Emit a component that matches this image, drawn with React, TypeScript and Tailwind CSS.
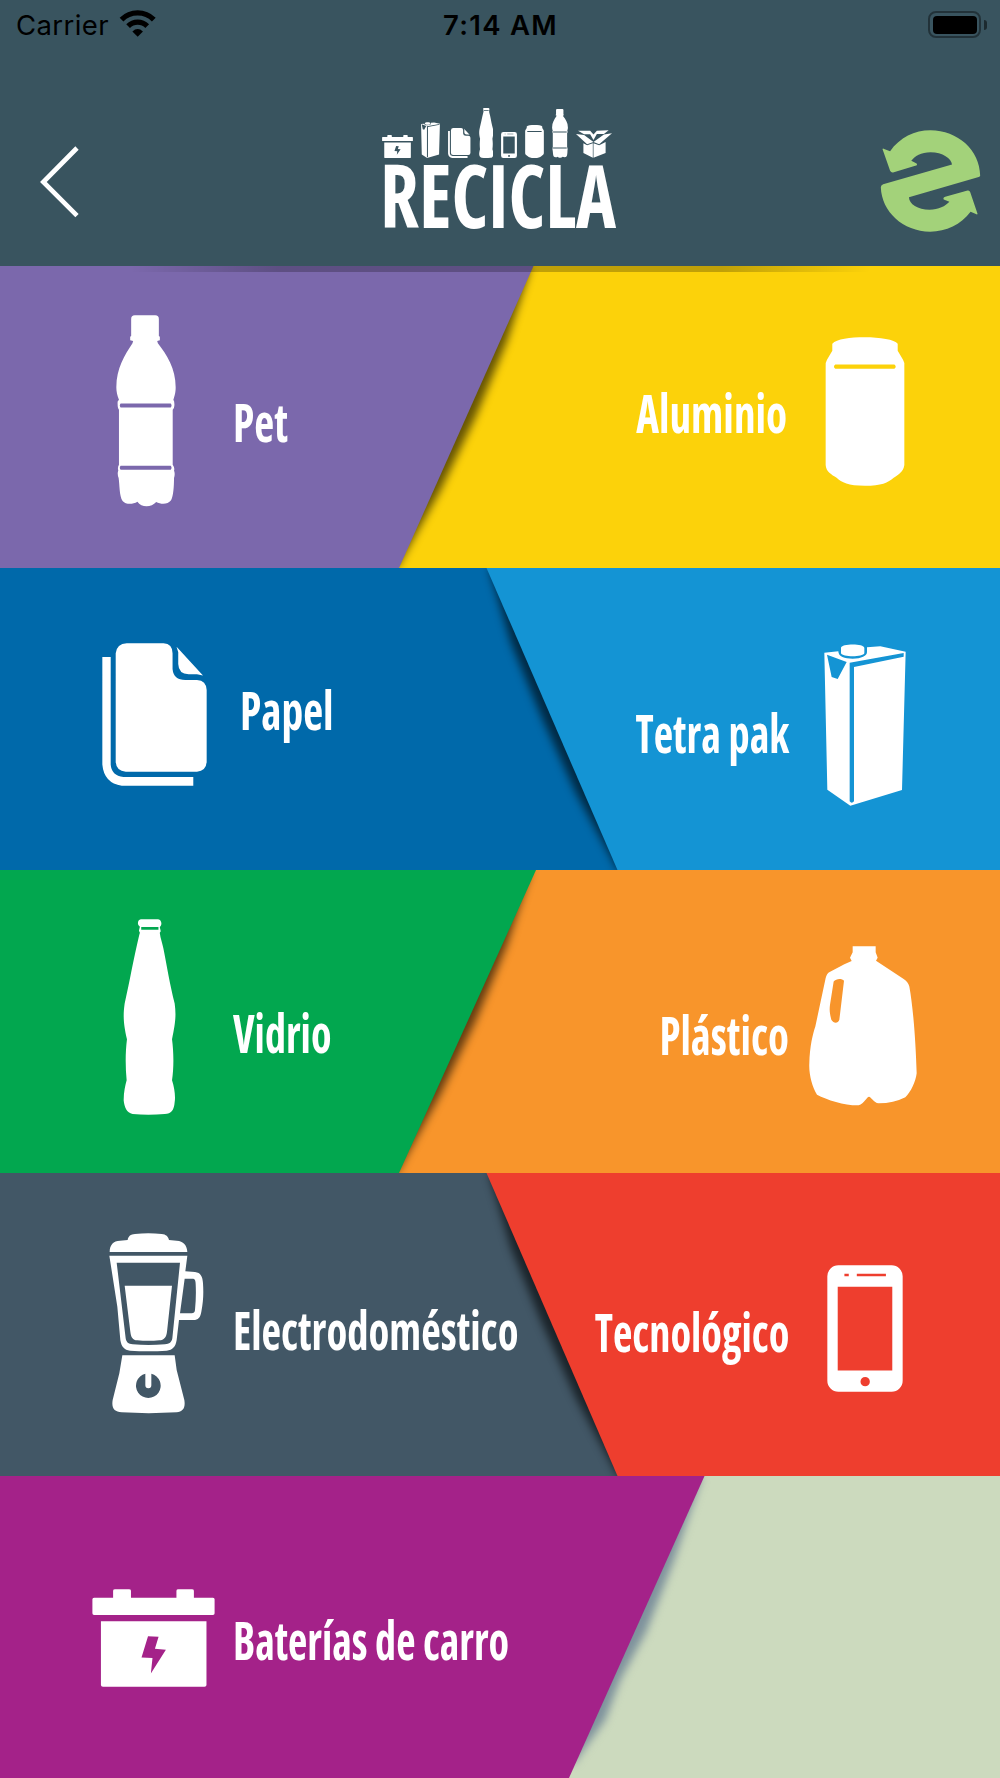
import type { ReactNode } from 'react';
import clsx from 'clsx';

type IconProps = { className?: string };

function Glyph({ viewBox, d, className }: IconProps & { viewBox: string; d: string }) {
  return (
    <svg
      viewBox={viewBox}
      className={clsx('block shrink-0', className)}
      preserveAspectRatio="none"
      fill="currentColor"
      fillRule="evenodd">
      <path d={d} />
    </svg>
  );
}

const PetIcon = ({ className }: IconProps) => (
  <Glyph
    className={className}
    viewBox="108 45 182 577"
    d="M165 46H227Q238 46 238 57V108L241 110V121L233 123L235 130C262 165 289 205 289 262C289 280 285 290 282 300Q286 305 285 318Q285 325 280 330V495Q287 505 284 512Q288 522 284 535C284 560 282 590 275 602C265 615 245 615 230 607C215 624 185 624 173 606C158 615 138 615 128 604C118 590 119 555 116 535Q111 522 115 512Q112 503 117 495V330Q112 325 113 305L117 300C112 288 109 275 109 262C109 205 135 165 158 130L160 123L151 121V110L154 108V57Q154 46 165 46ZM122 311Q117 317 122 323H274Q279 317 274 311ZM122 498Q117 504 122 510H274Q279 504 274 498Z"
  />
);

const CanIcon = ({ className }: IconProps) => (
  <Glyph
    className={className}
    viewBox="675 52 241 446"
    d="M697 72C710 58 750 53 795 53C840 53 885 60 894 72V93L910 120Q915 127 914 140V435C912 455 895 465 882 473C865 488 845 497 795 497C745 497 725 487 710 473C695 464 678 455 677 435V140Q676 128 681 120L697 93ZM706 134Q698 140.500 706 147H884Q892 140.500 884 134Z"
  />
);

const PaperIcon = ({ className }: IconProps) => (
  <Glyph
    className={className}
    viewBox="66 67 314 430"
    d="M67 109H92V432Q94 465 130 470H339V496H125Q72 488 67 432ZM140 68H250Q277 70 277 98V145Q280 178 315 178H350Q378 180 379 208V425Q377 452 350 454H137Q109 452 107 425V98Q110 70 140 68ZM289 78L368 165L350 161H325Q295 160 294 130V95Z"
  />
);

const CartonIcon = ({ className }: IconProps) => (
  <Glyph
    className={className}
    viewBox="673 72 246 487"
    d="M674 98L716 94C716 110 735 116 759 116C785 116 802 108 802 96V82L842 79L918 95L907 511L752 558L683 510ZM682 104L741 126L714 177L696 171ZM750 128L912 99V110L763 141V545Q756 553 750 545ZM724 84C724 71 793 70 794 84V100C790 112 728 112 724 100Z"
  />
);

const GlassIcon = ({ className }: IconProps) => (
  <Glyph
    className={className}
    viewBox="129 57 160 587"
    d="M183 58H235Q245 60 245 72Q243 80 240 81L243 94L240 98C242 115 248 130 251 145C262 200 270 250 285 310C290 345 287 370 277 417C282 455 283 500 277 540C284 560 288 590 285 605C283 630 275 640 255 641Q205 645 158 641C140 638 133 620 131 600C131 575 136 555 140 540C136 500 136 455 141 417C130 370 129 345 134 310C150 240 160 180 178 105L180 98L177 92L180 80Q174 78 174 70Q174 60 183 58ZM184 81V89H236V81Z"
  />
);

const JugIcon = ({ className }: IconProps) => (
  <Glyph
    className={className}
    viewBox="506 49 324 479"
    d="M637 50H706V68L712 84L707 93L740 115L790 148Q803 156 807 170C818 230 826 330 829 430C826 455 812 485 795 502Q760 520 715 520C700 518 692 500 686 500C680 500 672 520 655 526C615 527 560 510 530 494C515 470 505 430 507 400C508 350 518 310 525 290L556 145Q560 130 568 127L612 104L634 94L629 84L637 68ZM580 155C587 146 605 145 611 153L597 270C593 282 580 282 573 270C568 250 567 240 569 225Z"
  />
);

const BlenderIcon = ({ className }: IconProps) => (
  <Glyph
    className={className}
    viewBox="87 69 285 543"
    d="M89 126C89 105 100 92 120 92L143 90C145 78 152 73 165 72Q205 68 245 72C258 73 265 80 267 90L290 92C310 93 321 105 322 126ZM88 137H322L316 184L345 186C362 188 368 200 369 220C371 250 370 275 364 305C361 322 355 330 340 330H297L290 390C287 410 278 420 260 422Q205 426 150 422C133 420 124 410 121 390L112 290ZM110 158L137 385C139 397 145 402 158 403Q205 407 255 403C268 402 275 397 277 385L300 158ZM314 206H340Q347 207 347 222Q349 260 345 300Q344 310 335 310H300ZM134 227H276L261 365C259 382 252 390 238 391Q205 394 172 391C158 390 153 382 151 365ZM127 436H284L290 480L313 570C317 595 308 605 290 607Q205 612 125 607C103 605 94 595 98 570L118 490ZM196 491A37 37 0 1 0 214 491V526A9 9 0 0 1 196 526Z"
  />
);

const PhoneIcon = ({ className }: IconProps) => (
  <Glyph
    className={className}
    viewBox="742 46 227 380"
    d="M776 47H935A33 33 0 0 1 968 80V392A33 33 0 0 1 935 425H776A33 33 0 0 1 743 392V80A33 33 0 0 1 776 47ZM774 111V362H937V111ZM794 72V80H807V72ZM831 72V80H918V72ZM842 395A14 14 0 1 0 870 395A14 14 0 1 0 842 395Z"
  />
);

const BatteryIcon = ({ className }: IconProps) => (
  <Glyph
    className={className}
    viewBox="29 87 303 295"
    d="M34 113H81V92Q81 88 86 88H120Q125 88 125 92V113H237V92Q237 88 242 88H275Q280 88 280 92V113H327Q331 113 331 118V160Q331 165 327 165H34Q30 165 30 160V118Q30 113 34 113ZM51 184H311V376Q311 381 306 381H56Q51 381 51 376ZM167 229L151 293L178 295L174 341L211 270L184 267L193 231Z"
  />
);

const BoxIcon = ({ className }: IconProps) => (
  <Glyph
    className={className}
    viewBox="650 119 107 86"
    d="M650 131L674 134L702 156L683 163ZM757 129L733 133L702 156L719 163ZM656 121H692L702 133L712 121L747 120L733 131L712 131L702 150L692 132L674 132ZM672 160L683 166L700 160V204L672 190ZM702 160L719 166L738 156V190L702 204Z"
  />
);

function StatusBar() {
  return (
    <div className="flex h-[51px] items-center font-['Inter',sans-serif] text-[27.500px] leading-none text-black">
      <div className="flex w-[443px] items-center pl-4">
        <span className="mt-px tracking-[0.4px]">Carrier</span>
        <svg viewBox="360 30 111 82" className="-mt-1 ml-2.5 h-[27px] w-[37px]" fill="none" stroke="currentColor">
          <path d="M367 59A69 69 0 0 1 465 59" strokeWidth="16" />
          <path d="M387 79A41 41 0 0 1 445 79" strokeWidth="16" />
          <path d="M416 111L400 95Q416 80 432 95Z" fill="currentColor" stroke="none" />
        </svg>
      </div>
      <span className="mt-px font-semibold tracking-[1.300px] whitespace-nowrap">7:14 AM</span>
      <div className="mr-[13px] -mt-0.5 ml-auto flex items-center gap-[3px]">
        <div className="h-[27px] w-[53px] rounded-[8px] border-2 border-black/40 p-[2.500px]">
          <div className="h-full rounded-[4px] bg-black" />
        </div>
        <div className="h-2.5 w-[3px] rounded-r-full bg-black/50" />
      </div>
    </div>
  );
}

function Header() {
  return (
    <header className="relative z-20 h-[266px] bg-[#39545f]">
      <StatusBar />
      <div className="flex items-start text-white">
        <button className="mt-[95px] ml-10 w-[338px]" aria-label="Volver">
          <svg viewBox="120 437 117 216" className="h-[72px] w-[39px]" fill="none" stroke="currentColor" strokeWidth="14">
            <path d="M231 443L130 545L231 646" />
          </svg>
        </button>
        <div className="mt-[57px] w-[250px]">
          <div className="ml-1 flex items-end gap-2">
            <BatteryIcon className="h-[23px] w-[31px]" />
            <CartonIcon className="h-9 w-[19px]" />
            <PaperIcon className="h-[30px] w-[22.500px]" />
            <GlassIcon className="h-[50px] w-[14.500px]" />
            <PhoneIcon className="h-[26px] w-4" />
            <CanIcon className="h-[33px] w-[19px]" />
            <PetIcon className="h-[49px] w-4" />
            <BoxIcon className="h-7 w-9" />
          </div>
          <h1 className="-mt-2 ml-[2px] origin-left scale-x-[0.865] font-['Open_Sans',sans-serif] text-[88px] leading-none font-bold font-stretch-75%">
            RECICLA
          </h1>
        </div>
        <svg viewBox="92 389 302 308" className="mt-[79px] ml-[252px] h-[102px] w-[101px]" fill="#a3d27a">
          <path d="M98 446Q99 443 103 446L121 453C150 412 195 390 243 390C325 390 392 450 393 527Q392 531 386 532L178 592C178 612 205 630 240 630C268 630 288 619 300 606L283 599Q279 593 290 590L355 572Q361 571 363 577L385 642Q385 645 380 643L364 636C335 675 290 696 242 696C160 696 95 635 93 562Q93 556 100 553L308 493C306 475 280 456 243 456C215 456 195 468 185 482L201 490Q205 495 197 497L130 517Q124 518 121 512Z" />
        </svg>
      </div>
      {/* shade the header drops on the first row */}
      <div className="absolute top-full left-[130px] h-1.5 w-[740px] bg-[linear-gradient(to_right,transparent,rgba(0,0,0,0.24)_20%,rgba(0,0,0,0.24)_80%,transparent)]" />
    </header>
  );
}

function Label({ children, className }: { children: ReactNode; className?: string }) {
  return (
    <span
      className={clsx(
        "shrink-0 font-['Open_Sans',sans-serif] text-[53px] leading-none font-bold whitespace-nowrap font-stretch-75%",
        className,
      )}>
      {children}
    </span>
  );
}

type RowProps = {
  className: string;
  panel: string;
  shadow: string;
  children: ReactNode;
};

// Each row is a back colour with a slanted panel laid over it in the same grid cell.
function Row({ className, panel, shadow, children }: RowProps) {
  return (
    <div className={clsx('grid w-full overflow-hidden', className)}>
      <div className="blur-[4px] [grid-area:1/1]">
        <div className={clsx('h-full', shadow)} />
      </div>
      <div className={clsx('[grid-area:1/1]', panel)} />
      <div className="z-10 flex items-start justify-between [grid-area:1/1]">{children}</div>
    </div>
  );
}

const SLANT_LEFT_SHADOW =
  'bg-black/60 [clip-path:polygon(0_0,531px_0,507px_75px,476px_150px,440px_225px,397px_100%,0_100%)]';
const SLANT_RIGHT = '[clip-path:polygon(486.500px_0,100%_0,100%_100%,617.500px_100%)]';
const SLANT_RIGHT_SHADOW =
  'bg-black/60 [clip-path:polygon(489px_0,100%_0,100%_100%,618px_100%,576px_225px,542px_150px,511px_75px)]';

export default function App() {
  return (
    <div className="w-[1000px] overflow-hidden text-white">
      <Header />
      <Row
        className="h-[302px] bg-[#fcd20a]"
        panel="bg-[#7b68ac] [clip-path:polygon(0_0,533.500px_0,399px_100%,0_100%)]"
        shadow={SLANT_LEFT_SHADOW}>
        <div className="flex">
          <div className="w-[233px]">
            <PetIcon className="mt-[49px] ml-[116px] h-[192px] w-[60px]" />
          </div>
          <Label className="mt-[129px] origin-left scale-x-[0.82]">Pet</Label>
        </div>
        <div className="flex">
          <Label className="mt-[120px] origin-right scale-x-[0.815]">Aluminio</Label>
          <div className="w-[213px]">
            <CanIcon className="mt-[71px] ml-[38px] h-[149px] w-20" />
          </div>
        </div>
      </Row>
      <Row className="h-[302px] bg-[#0069aa]" panel={clsx('bg-[#1494d4]', SLANT_RIGHT)} shadow={SLANT_RIGHT_SHADOW}>
        <div className="flex">
          <div className="w-[240px]">
            <PaperIcon className="mt-[75px] ml-[102px] h-[143px] w-[105px]" />
          </div>
          <Label className="mt-[115px] origin-left scale-x-[0.82]">Papel</Label>
        </div>
        <div className="flex">
          <Label className="mt-[138px] origin-right scale-x-[0.8]">Tetra pak</Label>
          <div className="w-[211px]">
            <CartonIcon className="mt-[76px] ml-[35px] h-[162px] w-[82px]" />
          </div>
        </div>
      </Row>
      <Row
        className="h-[303px] bg-[#f8952b]"
        panel="bg-[#02a74f] [clip-path:polygon(0_0,536px_0,399px_100%,0_100%)]"
        shadow={SLANT_LEFT_SHADOW}>
        <div className="flex">
          <div className="w-[233px]">
            <GlassIcon className="mt-[49px] ml-[123px] h-[196px] w-[53px]" />
          </div>
          <Label className="mt-[136px] origin-left scale-x-[0.795]">Vidrio</Label>
        </div>
        <div className="flex">
          <Label className="mt-[138px] origin-right scale-x-[0.81]">Plástico</Label>
          <div className="w-[211px]">
            <JugIcon className="mt-[76px] ml-5 h-[160px] w-[108px]" />
          </div>
        </div>
      </Row>
      <Row className="h-[303px] bg-[#425766]" panel={clsx('bg-[#ee3e2e]', SLANT_RIGHT)} shadow={SLANT_RIGHT_SHADOW}>
        <div className="flex w-[520px]">
          <div className="w-[233px] shrink-0">
            <BlenderIcon className="mt-[60px] ml-[109px] h-[181px] w-[95px]" />
          </div>
          <Label className="mt-[130px] origin-left scale-x-[0.805]">Electrodoméstico</Label>
        </div>
        <div className="flex w-[480px] justify-end">
          <Label className="mt-[132px] origin-right scale-x-[0.8]">Tecnológico</Label>
          <div className="w-[211px] shrink-0">
            <PhoneIcon className="mt-[92px] ml-[38px] h-[127px] w-[76px]" />
          </div>
        </div>
      </Row>
      <Row
        className="h-[302px] bg-[#ccdabe]"
        panel="bg-[#a42289] [clip-path:polygon(0_0,704.500px_0,569px_100%,0_100%)]"
        shadow="bg-[#7d919c] [clip-path:polygon(0_0,702px_0,674px_84px,646px_156px,620px_204px,605px_244px,574px_287px,0_100%)]">
        <div className="flex">
          <div className="w-[233px]">
            <BatteryIcon className="mt-[113px] ml-[92px] h-[98px] w-[123px]" />
          </div>
          <Label className="mt-[137px] origin-left scale-x-[0.795]">Baterías de carro</Label>
        </div>
      </Row>
    </div>
  );
}
